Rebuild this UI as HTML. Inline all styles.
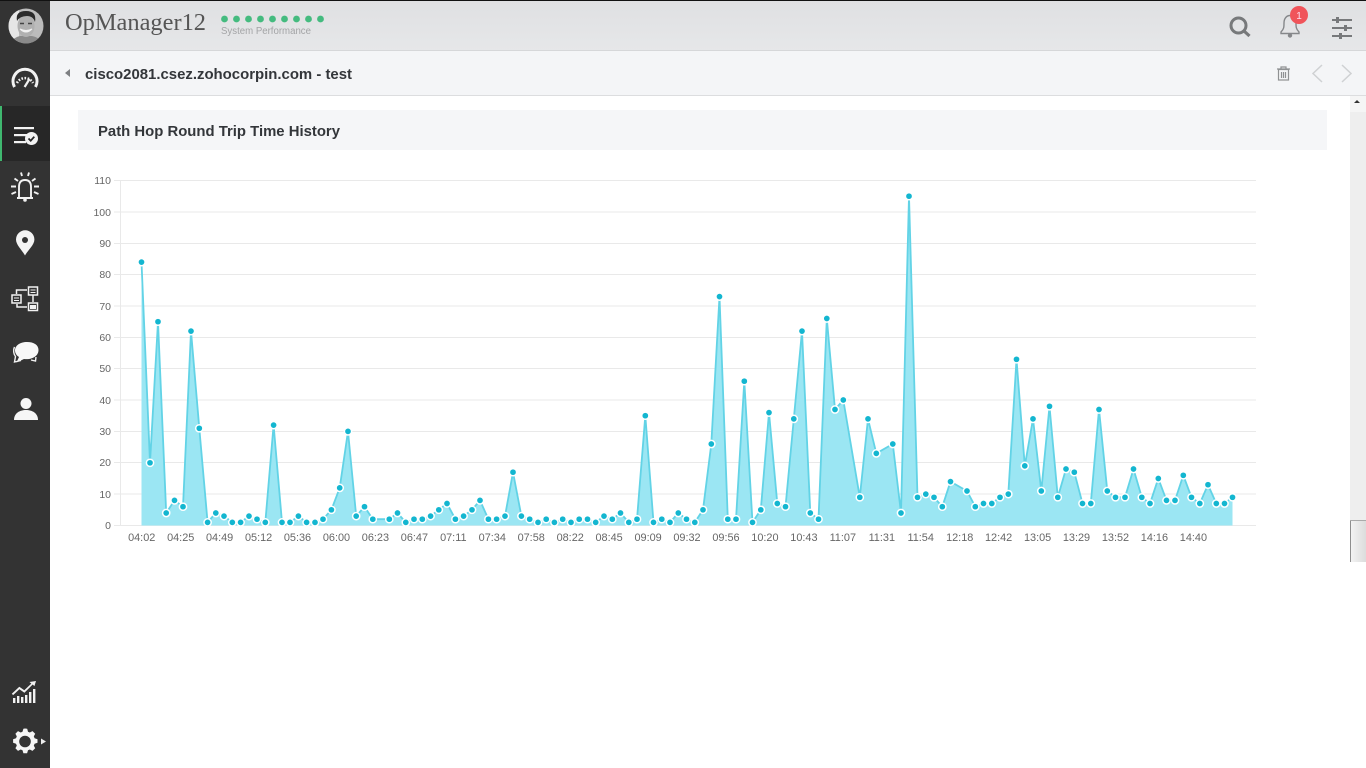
<!DOCTYPE html>
<html><head><meta charset="utf-8"><title>OpManager12</title>
<style>
html,body{margin:0;padding:0;width:1366px;height:768px;overflow:hidden;background:#fff}
svg{position:absolute;left:0;top:0;display:block}
text{font-family:"Liberation Sans",sans-serif}
</style></head><body>
<svg width="1366" height="768" viewBox="0 0 1366 768" xmlns="http://www.w3.org/2000/svg">
<defs>
<linearGradient id="hd" x1="0" y1="0" x2="0" y2="1"><stop offset="0" stop-color="#dfe0e2"/><stop offset="1" stop-color="#e6e7e9"/></linearGradient>
<linearGradient id="thumb" x1="0" y1="0" x2="1" y2="0"><stop offset="0" stop-color="#f4f4f4"/><stop offset="1" stop-color="#dcdcdc"/></linearGradient>
<marker id="d" markerUnits="userSpaceOnUse" markerWidth="10" markerHeight="10" refX="5" refY="5"><circle cx="5" cy="5" r="3.6" fill="#13b6d0" stroke="#fff" stroke-width="1.5"/></marker>
<clipPath id="av"><circle cx="26" cy="26" r="17.5"/></clipPath>
</defs>
<rect x="50" y="0" width="1316" height="51" fill="url(#hd)"/>
<rect x="0" y="0" width="1366" height="1" fill="#111"/>
<rect x="50" y="51" width="1316" height="44" fill="#f4f5f7"/>
<rect x="50" y="95" width="1316" height="1" fill="#dcdddf"/>
<rect x="50" y="50" width="1316" height="1" fill="#d6d7d9"/>

<rect x="0" y="1" width="50" height="767" fill="#333333"/>
<rect x="0" y="106" width="50" height="55" fill="#272727"/>
<rect x="0" y="106" width="2" height="55" fill="#3fb76f"/>

<g clip-path="url(#av)">
<rect x="8" y="8" width="36" height="36" fill="#bcbcbc"/>
<rect x="8" y="8" width="11" height="36" fill="#e6e6e6"/>
<path d="M9 44 Q14 37 20 36 L32 36 Q39 37 44 44Z" fill="#8a8a8a"/>
<ellipse cx="26" cy="26" rx="8.500" ry="11" fill="#b0b0b0"/>
<path d="M17 21 Q15 11 26 11 Q37 11 35 22 Q33 16 27 16 Q20 16 17 21Z" fill="#2a2a2a"/>
<path d="M20 23.500h4M28 23.500h4" stroke="#444" stroke-width="1.500"/>
<path d="M20 29 Q26 35 32 29 Q26 32 20 29Z" fill="#f0f0f0" stroke="#f0f0f0"/>
</g>

<g fill="none" stroke="#f2f2f2">
<path d="M14.500 87 A12 12 0 1 1 35.500 87" stroke-width="3"/>
<path d="M17 83 A9 9 0 0 1 33 83" stroke-width="2.600" stroke-dasharray="1.600 1.500"/>
<path d="M29.500 79 L24.600 87" stroke-width="2.200"/>
</g>

<g fill="#f2f2f2">
<rect x="14" y="127" width="20" height="2.200"/><rect x="14" y="134" width="14" height="2.200"/><rect x="14" y="141" width="12" height="2.200"/>
<circle cx="31.500" cy="138.500" r="6.500"/>
</g>
<path d="M28.500 138.500l2.200 2.200 3.600-4" fill="none" stroke="#272727" stroke-width="1.800"/>

<g fill="none" stroke="#f2f2f2" stroke-width="1.900">
<path d="M19 197 V187 Q19 180 25 180 Q31 180 31 187 V197"/>
<path d="M17 198 H33" stroke-width="2"/>
<path d="M18 181l-3.500-2.500M11 186.500h5M11.500 194l4.500-2M22 176l-1-3.500M28 176l1-3.500M32 181l3.500-2.500M34 186.500h5M38.500 194l-4.500-2"/>
</g>
<circle cx="25" cy="200" r="1.800" fill="#f2f2f2"/>

<path d="M25 255.500 C22 250 16 245 16 239.500 A9.200 9.200 0 0 1 34.400 239.500 C34.400 245 28 250 25 255.500Z" fill="#f4f4f4"/>
<circle cx="25" cy="240" r="3" fill="#333"/>

<g fill="none" stroke="#f2f2f2" stroke-width="1.500">
<rect x="12" y="295" width="9" height="8"/>
<rect x="28.500" y="287" width="9" height="8"/>
<rect x="28.500" y="303" width="9" height="7.500"/>
<path d="M16.500 294V290H27M17 304V307H27M33 295V302"/>
<path d="M14 298h5M14 300.500h5M30.500 290h5M30.500 292.500h5" stroke-width="1"/>
</g>
<rect x="30" y="305" width="6" height="4" fill="#f2f2f2"/>

<path d="M27 342 C20 342 15 345.500 15 350.500 C15 353 16.500 355.500 19 357 L16.500 362.500 L24 359 C33 360 38.500 355.500 38.500 350 C38.500 345 34 342 27 342Z" fill="#f8f8f8"/>
<path d="M14.500 347 C13 350 13.500 354 15.500 356.500 L14.500 362 L21 360.500 M36 357 L35.500 361 L31 360" fill="none" stroke="#f2f2f2" stroke-width="1.400"/>

<circle cx="26" cy="403.500" r="5.500" fill="#f6f6f6"/>
<path d="M14 420 C14 413 20 410 26 410 C32 410 38 413 38 420Z" fill="#f6f6f6"/>

<g fill="#f2f2f2">
<path d="M13 703h2.400v-5h-2.400zM17 703h2.400v-7h-2.400zM21 703h2.400v-6h-2.400zM25 703h2.400v-8h-2.400zM29 703h2.400v-11h-2.400zM33 703h2.400v-14h-2.400z"/>
<path d="M36 681l-6.500 1 1.800 1.600-7 6.600-5-3.500-7.500 7 1.300 1.400 6.300-5.900 5 3.500 8.300-8.200 1.700 1.600z"/>
</g>

<path d="M25 728.500l2.200.3.800 2.900 1.800.8 2.700-1.400 2.700 2.600-1.400 2.700.8 1.900 2.900.9v3.600l-2.900.9-.8 1.900 1.400 2.700-2.700 2.600-2.700-1.400-1.800.8-.9 2.900h-3.700l-.9-2.900-1.800-.8-2.700 1.400-2.600-2.600 1.400-2.700-.8-1.900-2.900-.9v-3.600l2.900-.9.8-1.900-1.400-2.700 2.600-2.600 2.700 1.400 1.800-.8.9-2.900z" fill="#f6f6f6"/>
<circle cx="25" cy="741.500" r="5.800" fill="#333"/>
<path d="M41 738.500l5 3-5 3z" fill="#ececec"/>

<text x="65" y="30" font-size="24" fill="#555" textLength="141" lengthAdjust="spacingAndGlyphs" style='font-family:"Liberation Serif",serif'>OpManager12</text>
<g fill="#44bb7f">
<circle cx="224.500" cy="19" r="3.400"/><circle cx="236.500" cy="19" r="3.400"/><circle cx="248.500" cy="19" r="3.400"/><circle cx="260.500" cy="19" r="3.400"/><circle cx="272.500" cy="19" r="3.400"/><circle cx="284.500" cy="19" r="3.400"/><circle cx="296.500" cy="19" r="3.400"/><circle cx="308.500" cy="19" r="3.400"/><circle cx="320.500" cy="19" r="3.400"/>
</g>
<text x="221" y="34" font-size="10" fill="#a3a4a6" textLength="90" lengthAdjust="spacingAndGlyphs">System Performance</text>

<path d="M65 73l5-4v8z" fill="#7d7f82"/>
<text x="85" y="79" font-size="15" font-weight="700" fill="#33363a" textLength="267" lengthAdjust="spacingAndGlyphs">cisco2081.csez.zohocorpin.com - test</text>

<g fill="none" stroke="#77797b">
<circle cx="1238.500" cy="25.500" r="7.500" stroke-width="3"/>
<path d="M1244 31l5.500 5" stroke-width="3.200"/>
<path d="M1281 32 C1284 29 1284 27 1284 23 C1284 18 1287 15.500 1290 15.500 C1293 15.500 1296 18 1296 23 C1296 27 1296 29 1299 32 V33.500 H1281Z" stroke-width="1.400" stroke="#85878a"/>
</g>
<circle cx="1290" cy="35.500" r="2.200" fill="#85878a"/>
<circle cx="1299" cy="15" r="9" fill="#f0545a"/>
<text x="1299" y="19" font-size="10" fill="#fde" text-anchor="middle">1</text>
<g fill="#77797b">
<rect x="1332" y="19" width="20" height="2"/><rect x="1332" y="27" width="20" height="2"/><rect x="1332" y="35" width="20" height="2"/>
<rect x="1336" y="17" width="3" height="6"/><rect x="1344" y="25" width="3" height="6"/><rect x="1339" y="33" width="3" height="6"/>
</g>
<g fill="none" stroke="#8f9193" stroke-width="1.200">
<path d="M1277 69h13M1281 69v-2h5v2"/>
<rect x="1278.500" y="69.500" width="10" height="10.500"/>
<path d="M1281.500 72v6M1283.500 72v6M1285.500 72v6"/>
</g>
<g fill="none" stroke="#cfd1d3" stroke-width="1.500">
<path d="M1322 65l-9 8.500 9 8.500M1342 65l9 8.500-9 8.500"/>
</g>

<rect x="78" y="110" width="1249" height="40" fill="#f5f6f8"/>
<text x="98" y="136" font-size="15" font-weight="700" fill="#33363a" textLength="242" lengthAdjust="spacingAndGlyphs">Path Hop Round Trip Time History</text>

<rect x="1350" y="96" width="16" height="466" fill="#eeeeee"/>
<rect x="1350" y="96" width="16" height="16" fill="#f5f5f5"/>
<path d="M1354 103l3-3 3 3z" fill="#333"/>
<rect x="1350" y="520" width="16" height="42" fill="url(#thumb)"/>
<rect x="1350" y="520" width="1" height="42" fill="#8e8e8e"/>
<rect x="1350" y="520" width="16" height="1" fill="#aaa"/>

<g stroke="#e9e9e9" stroke-width="1" fill="none">
<path d="M114 180.500H1256M114 212H1256M114 243.500H1256M114 274.500H1256M114 306H1256M114 337.500H1256M114 368.500H1256M114 400H1256M114 431.500H1256M114 462.500H1256M114 494H1256M114 525.500H1256M120.500 180V526"/>
</g>
<g font-size="10.500" fill="#666" text-anchor="end">
<text x="111" y="184">110</text><text x="111" y="216">100</text><text x="111" y="247">90</text><text x="111" y="278">80</text><text x="111" y="310">70</text><text x="111" y="341">60</text><text x="111" y="372">50</text><text x="111" y="404">40</text><text x="111" y="435">30</text><text x="111" y="466">20</text><text x="111" y="498">10</text><text x="111" y="529">0</text>
</g>
<g font-size="10.900" fill="#666" text-anchor="middle">
<text x="141.700" y="541">04:02</text><text x="180.700" y="541">04:25</text><text x="219.600" y="541">04:49</text><text x="258.600" y="541">05:12</text><text x="297.500" y="541">05:36</text><text x="336.500" y="541">06:00</text><text x="375.400" y="541">06:23</text><text x="414.400" y="541">06:47</text><text x="453.300" y="541">07:11</text><text x="492.300" y="541">07:34</text><text x="531.200" y="541">07:58</text><text x="570.200" y="541">08:22</text><text x="609.100" y="541">08:45</text><text x="648.100" y="541">09:09</text><text x="687" y="541">09:32</text><text x="726" y="541">09:56</text><text x="764.900" y="541">10:20</text><text x="803.900" y="541">10:43</text><text x="842.800" y="541">11:07</text><text x="881.800" y="541">11:31</text><text x="920.700" y="541">11:54</text><text x="959.700" y="541">12:18</text><text x="998.600" y="541">12:42</text><text x="1037.600" y="541">13:05</text><text x="1076.500" y="541">13:29</text><text x="1115.500" y="541">13:52</text><text x="1154.400" y="541">14:16</text><text x="1193.400" y="541">14:40</text>
</g>

<polygon fill="#9be6f3" points="141.5,525.5 141.5,262.1 150,462.8 158,321.7 166.2,513 174.5,500.4 183,506.7 191,331.1 199.3,428.3 207.6,522.4 215.8,513 224,516.1 232.3,522.4 240.6,522.4 249,516.1 257,519.2 265.3,522.4 273.6,425.1 282,522.4 290,522.4 298.4,516.1 306.6,522.4 315,522.4 323,519.2 331.4,509.8 339.7,487.9 348,431.4 356.2,516.1 364.5,506.7 372.8,519.2 389.3,519.2 397.5,513 405.8,522.4 414,519.2 422.3,519.2 430.6,516.1 438.8,509.8 447,503.5 455.4,519.2 463.6,516.1 472,509.8 480,500.4 488.4,519.2 496.6,519.2 505,516.1 513,472.2 521.4,516.1 529.7,519.2 538,522.4 546.2,519.2 554.4,522.4 562.7,519.2 571,522.4 579.2,519.2 587.5,519.2 595.7,522.4 604,516.1 612.3,519.2 620.5,513 628.8,522.4 637,519.2 645.3,415.7 653.5,522.4 661.8,519.2 670,522.4 678.3,513 686.5,519.2 694.8,522.4 703,509.8 711.3,444 719.5,296.6 727.8,519.2 736,519.2 744.3,381.2 752.5,522.4 760.8,509.8 769,412.6 777.3,503.5 785.5,506.7 793.8,418.9 802,331.1 810.3,513 818.5,519.2 826.8,318.5 835,409.5 843.3,400 859.8,497.3 868,418.9 876.3,453.4 892.8,444 901,513 909,196.2 917.5,497.3 925.8,494.1 934,497.3 942.3,506.7 950.5,481.6 967,491 975.3,506.7 983.5,503.5 991.8,503.5 1000,497.3 1008.3,494.1 1016.5,359.3 1024.8,465.9 1033,418.9 1041.3,491 1049.5,406.3 1057.8,497.3 1066,469 1074.3,472.2 1082.5,503.5 1090.8,503.5 1099,409.5 1107.3,491 1115.5,497.3 1125,497.3 1133.5,469 1141.8,497.3 1150,503.5 1158.3,478.5 1166.5,500.4 1175,500.4 1183.3,475.3 1191.5,497.3 1199.8,503.5 1208,484.7 1216.3,503.5 1224.5,503.5 1232.5,497.3 1232.5,525.5"/>
<polyline fill="none" stroke="#62d3e6" stroke-width="1.800" stroke-linejoin="miter" marker-start="url(#d)" marker-mid="url(#d)" marker-end="url(#d)" points="141.5,262.1 150,462.8 158,321.7 166.2,513 174.5,500.4 183,506.7 191,331.1 199.3,428.3 207.6,522.4 215.8,513 224,516.1 232.3,522.4 240.6,522.4 249,516.1 257,519.2 265.3,522.4 273.6,425.1 282,522.4 290,522.4 298.4,516.1 306.6,522.4 315,522.4 323,519.2 331.4,509.8 339.7,487.9 348,431.4 356.2,516.1 364.5,506.7 372.8,519.2 389.3,519.2 397.5,513 405.8,522.4 414,519.2 422.3,519.2 430.6,516.1 438.8,509.8 447,503.5 455.4,519.2 463.6,516.1 472,509.8 480,500.4 488.4,519.2 496.6,519.2 505,516.1 513,472.2 521.4,516.1 529.7,519.2 538,522.4 546.2,519.2 554.4,522.4 562.7,519.2 571,522.4 579.2,519.2 587.5,519.2 595.7,522.4 604,516.1 612.3,519.2 620.5,513 628.8,522.4 637,519.2 645.3,415.7 653.5,522.4 661.8,519.2 670,522.4 678.3,513 686.5,519.2 694.8,522.4 703,509.8 711.3,444 719.5,296.6 727.8,519.2 736,519.2 744.3,381.2 752.5,522.4 760.8,509.8 769,412.6 777.3,503.5 785.5,506.7 793.8,418.9 802,331.1 810.3,513 818.5,519.2 826.8,318.5 835,409.5 843.3,400 859.8,497.3 868,418.9 876.3,453.4 892.8,444 901,513 909,196.2 917.5,497.3 925.8,494.1 934,497.3 942.3,506.7 950.5,481.6 967,491 975.3,506.7 983.5,503.5 991.8,503.5 1000,497.3 1008.3,494.1 1016.5,359.3 1024.8,465.9 1033,418.9 1041.3,491 1049.5,406.3 1057.8,497.3 1066,469 1074.3,472.2 1082.5,503.5 1090.8,503.5 1099,409.5 1107.3,491 1115.5,497.3 1125,497.3 1133.5,469 1141.8,497.3 1150,503.5 1158.3,478.5 1166.5,500.4 1175,500.4 1183.3,475.3 1191.5,497.3 1199.8,503.5 1208,484.7 1216.3,503.5 1224.5,503.5 1232.5,497.3"/>
</svg>
</body></html>
